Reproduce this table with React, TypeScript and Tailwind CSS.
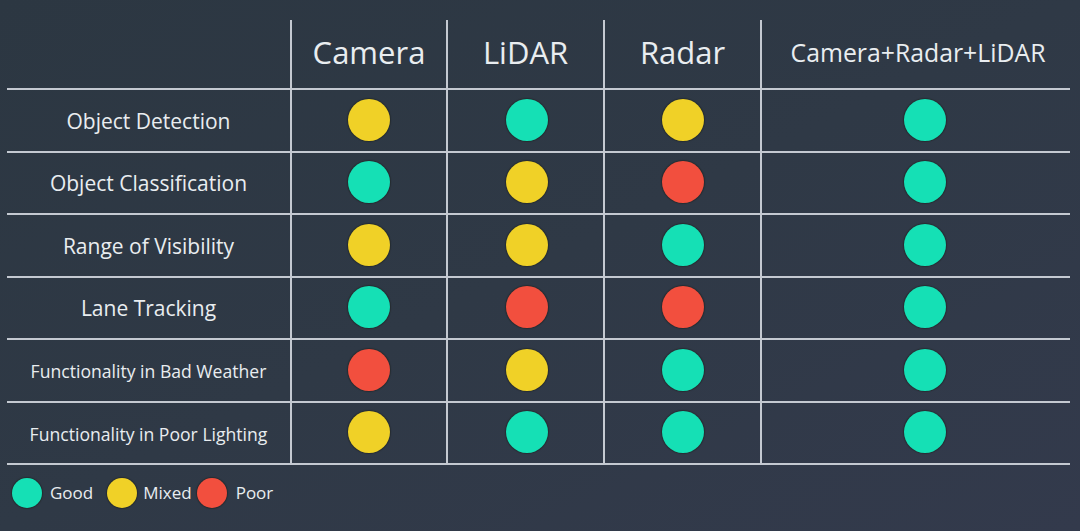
import React from "react";

type S = "g" | "m" | "p";

const rows: { label: string; small?: boolean; vals: S[] }[] = [
  { label: "Object Detection", vals: ["m", "g", "m", "g"] },
  { label: "Object Classification", vals: ["g", "m", "p", "g"] },
  { label: "Range of Visibility", vals: ["m", "m", "g", "g"] },
  { label: "Lane Tracking", vals: ["g", "p", "p", "g"] },
  { label: "Functionality in Bad Weather", small: true, vals: ["p", "m", "g", "g"] },
  { label: "Functionality in Poor Lighting", small: true, vals: ["m", "g", "g", "g"] },
];

const color: Record<S, string> = {
  g: "bg-[#15e0b5]",
  m: "bg-[#f0d127]",
  p: "bg-[#f24f3e]",
};

const rowH = ["h-[63px]", "h-[62px]", "h-[63px]", "h-[62px]", "h-[63px]", "h-[62px]"];

function Dot({ s, big = true }: { s: S; big?: boolean }) {
  return (
    <div
      className={`${big ? "w-[42px] h-[42px]" : "w-[30px] h-[30px]"} rounded-full ${color[s]} shadow-[0_0_1px_1px_rgba(20,20,10,0.35)]`}
    />
  );
}

const line = "border-[#c4c9d1]";

export default function App() {
  return (
    <div
      className="w-[1080px] h-[531px] overflow-hidden bg-linear-to-br from-[#2c3742] via-[#2f3946] to-[#333a4c] text-[#e9edf0]"
      style={{ fontFamily: '"Open Sans", "Noto Sans", sans-serif' }}
    >
      <div className="pt-[20px] pl-[7px] w-[1070px]">
        {/* header */}
        <div className={`grid grid-cols-[283px_156px_157px_157px_310px] h-[70px] border-b-2 ${line}`}>
          <div />
          <div className={`border-l-2 ${line} flex items-center justify-center text-[31px] pb-[4px]`}>Camera</div>
          <div className={`border-l-2 ${line} flex items-center justify-center text-[31px] pb-[4px]`}>LiDAR</div>
          <div className={`border-l-2 ${line} flex items-center justify-center text-[31px] pb-[4px]`}>Radar</div>
          <div className={`border-l-2 ${line} flex items-center justify-center text-[24.8px] pb-[2px] pl-[4px]`}>
            Camera+Radar+LiDAR
          </div>
        </div>
        {rows.map((r, i) => (
          <div
            key={r.label}
            className={`grid grid-cols-[283px_156px_157px_157px_310px] ${rowH[i]} border-b-2 ${line}`}
          >
            <div
              className={`flex items-center justify-center ${r.small ? "text-[17.6px]" : "text-[21px]"} pt-[2px]`}
            >
              {r.label}
            </div>
            {r.vals.map((v, j) => (
              <div
                key={j}
                className={`border-l-2 ${line} flex items-center justify-center ${j === 3 ? "pl-[18px]" : ""} ${
                  j === 1 ? "pl-[2px]" : ""
                }`}
              >
                <div className="mb-[2px]">
                  <Dot s={v} />
                </div>
              </div>
            ))}
          </div>
        ))}
      </div>
      {/* legend */}
      <div className="flex items-center pl-[12px] mt-[13px] text-[17px]">
        <Dot s="g" big={false} />
        <span className="ml-[8px] mr-[14px]">Good</span>
        <Dot s="m" big={false} />
        <span className="ml-[6px] mr-[5px]">Mixed</span>
        <Dot s="p" big={false} />
        <span className="ml-[9px]">Poor</span>
      </div>
    </div>
  );
}
